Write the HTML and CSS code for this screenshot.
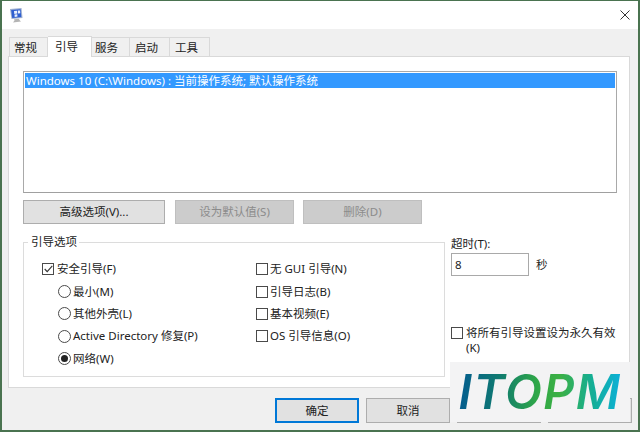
FILE: index.html
```html
<!DOCTYPE html>
<html lang="zh">
<head>
<meta charset="utf-8">
<title>系统配置</title>
<link rel="stylesheet" href="styles.css">
</head>
<body>
<div class="window">
  <header class="titlebar">
    <svg class="app-icon" width="14" height="15" viewBox="0 0 14 15">
      <path d="M1 1 12.5 0 13.5 10 2.5 11Z" fill="#9fb0d0"/>
      <path d="M2.2 2 11.6 1.2 12.3 9 3.2 9.9Z" fill="#2f5fd0"/>
      <path d="M5 3 8 2.7 8.3 5.6 5.3 5.9ZM8.8 2.6 11 2.4 11.3 5.2 9 5.4ZM5.5 6.5 8.3 6.2 8.5 8.6 5.7 8.9Z" fill="#eaf1fd"/>
      <path d="M5 11.2 10 10.8 10.5 12 12 13.5 4 14.5 5.5 12.5Z" fill="#b4b4b4"/>
    </svg>
    <svg class="close-icon" width="10" height="10" viewBox="0 0 10 10">
      <path d="M.5.5 9.5 9.5M9.5.5.5 9.5" stroke="#333" stroke-width="1" fill="none"/>
    </svg>
  </header>
  <main class="content">
    <nav class="tabs">
      <span class="tab tab-a">常规</span>
      <span class="tab tab-active">引导</span>
      <span class="tab tab-b">服务</span>
      <span class="tab tab-c">启动</span>
      <span class="tab tab-c">工具</span>
    </nav>
    <section class="panel">
      <div class="listbox">
        <div class="list-row">Windows 10 (C:\Windows) : 当前操作系统; 默认操作系统</div>
      </div>
      <div class="list-actions">
        <button class="btn btn-wide">高级选项(V)...</button>
        <button class="btn btn-mid btn-off">设为默认值(S)</button>
        <button class="btn btn-mid btn-off">删除(D)</button>
      </div>
      <div class="options">
        <fieldset class="group">
          <legend class="legend">引导选项</legend>
          <div class="col col-left">
            <label class="row"><span class="check checked"><svg width="9" height="8" viewBox="0 0 9 8"><path d="M.7 4 3.2 6.6 8.3.8" stroke="#333" stroke-width="1.1" fill="none"/></svg></span>安全引导(F)</label>
            <label class="row row-radio"><span class="radio"></span>最小(M)</label>
            <label class="row row-radio"><span class="radio"></span>其他外壳(L)</label>
            <label class="row row-radio"><span class="radio"></span>Active Directory 修复(P)</label>
            <label class="row row-radio"><span class="radio radio-on"></span>网络(W)</label>
          </div>
          <div class="col col-right">
            <label class="row"><span class="check"></span>无 GUI 引导(N)</label>
            <label class="row"><span class="check"></span>引导日志(B)</label>
            <label class="row"><span class="check"></span>基本视频(E)</label>
            <label class="row"><span class="check"></span>OS 引导信息(O)</label>
          </div>
        </fieldset>
        <div class="side">
          <div class="timeout-label">超时(T):</div>
          <div class="timeout-row">
            <span class="input">8</span>
            <span class="unit">秒</span>
          </div>
          <label class="permanent"><span class="check"></span><span class="permanent-text">将所有引导设置设为永久有效<br>(K)</span></label>
        </div>
      </div>
    </section>
    <footer class="footer">
      <button class="btn btn-foot btn-default">确定</button>
      <button class="btn btn-foot">取消</button>
      <button class="btn btn-foot"></button>
      <button class="btn btn-foot"></button>
    </footer>
  </main>
  <div class="logo"><span class="logo-text">ITOPM</span></div>
</div>
</body>
</html>
```
FILE: styles.css
```css
* { box-sizing: border-box; }
html, body { margin: 0; padding: 0; }
body {
  width: 640px;
  height: 432px;
  overflow: hidden;
  font: 11.5px/16px "Noto Sans", "Noto Sans CJK SC", sans-serif;
  color: #222;
}
.window {
  position: relative;
  width: 640px;
  height: 432px;
  border: 2px solid #4a7350;
  border-width: 1px 2px 2px 2px;
  background: #f0f0f0;
  display: flex;
  flex-direction: column;
}
.titlebar {
  height: 28px;
  flex: none;
  background: #fff;
  display: flex;
  align-items: center;
  justify-content: space-between;
  padding: 0 8px 0 7px;
}
.content { flex: 1; padding: 7px 6px 0 6px; display: flex; flex-direction: column; }
.tabs { display: flex; height: 21px; padding-left: 1px; align-items: flex-end; position: relative; z-index: 1; margin-bottom: -1px; }
.tab {
  height: 20px;
  background: #f0f0f0;
  border: 1px solid #d9d9d9;
  border-left-width: 0;
  line-height: 19px;
  color: #222;
}
.tab-a { width: 39px; border-left-width: 1px; padding-left: 4px; }
.tab-active { width: 44px; height: 21px; background: #fff; border-bottom: 0; line-height: 19px; padding-left: 7px; }
.tab-b { width: 38px; padding-left: 3px; }
.tab-c { width: 40px; padding-left: 5px; }
.panel {
  width: 622px;
  height: 332px;
  flex: none;
  background: #fff;
  border: 1px solid #d9d9d9;
  padding: 14px 13px 0 14px;
}
.listbox {
  width: 594px;
  height: 122px;
  border: 1px solid #a9a9a9;
  padding: 1px;
  border-bottom-color: #a0a0a0;
}
.list-row { height: 15px; line-height: 15px; padding-left: 1px; background: #3399ff; color: #fff; white-space: nowrap; }
.list-actions { display: flex; margin-top: 7px; }
.btn {
  font: inherit;
  color: #222;
  background: #e1e1e1;
  border: 1px solid #adadad;
  padding: 0;
  height: 24px;
  border-radius: 0;
}
.btn-wide { width: 142px; margin-right: 10px; }
.btn-mid { width: 119px; margin-right: 9px; }
.btn-off { background: #cccccc; border-color: #bfbfbf; color: #8b8b8b; }
.options { display: flex; margin-top: 11px; }
.group {
  position: relative;
  width: 422px;
  height: 142px;
  margin: 0;
  padding: 9px 0 0 18px;
  border: 1px solid #dcdcdc;
  border-radius: 0;
  display: flex;
  min-width: 0;
}
.legend { padding: 0 2px 0 3px; margin-left: -14px; line-height: 14px; }
.col { display: flex; flex-direction: column; }
.col-left { width: 214px; }
.row { display: flex; align-items: center; height: 22.4px; white-space: nowrap; }
.row-radio { padding-left: 16px; }
.check {
  width: 12px;
  height: 12px;
  border: 1px solid #4a4a4a;
  background: #fff;
  margin-right: 3px;
  flex: none;
  display: flex;
  align-items: center;
  justify-content: center;
}
.col-right .check { margin-right: 2px; }
.radio {
  width: 13px;
  height: 13px;
  border: 1px solid #4a4a4a;
  border-radius: 50%;
  background: #fff;
  margin-right: 2px;
  flex: none;
  position: relative;
}
.radio-on::after {
  content: "";
  position: absolute;
  left: 2px;
  top: 2px;
  width: 7px;
  height: 7px;
  border-radius: 50%;
  background: #222;
}
.side { margin-left: 6px; width: 165px; margin-top: 1px; display: flex; flex-direction: column; }
.timeout-label { height: 16px; line-height: 16px; margin-bottom: 1px; }
.timeout-row { display: flex; align-items: center; }
.input {
  width: 78px;
  height: 23px;
  border: 1px solid #a9a9a9;
  background: #fff;
  line-height: 21px;
  padding-left: 3px;
}
.unit { margin-left: 7px; }
.permanent { display: flex; margin-top: 50px; align-items: flex-start; }
.permanent .check { margin-top: 1px; margin-right: 3px; }
.permanent-text { width: 150px; line-height: 14.5px; display: block; white-space: nowrap; }
.footer { display: flex; justify-content: flex-end; gap: 7px; padding: 10px 0 0 0; }
.btn-foot { width: 84px; height: 25px; }
.btn-default { border: 2px solid #0078d7; }
.logo {
  position: absolute;
  left: 448px;
  top: 361px;
  width: 180px;
  height: 60px;
  background: #f3f3f4;
  display: flex;
  align-items: center;
  justify-content: center;
}
.logo-text {
  font: italic 600 48px/50px Inter, sans-serif;
  letter-spacing: 1.5px;
  background: linear-gradient(90deg, #035b8f 0%, #0f7a70 25%, #2fa748 48%, #3cb044 62%, #14ae96 82%, #0bb0dc 100%);
  -webkit-background-clip: text;
  background-clip: text;
  color: transparent;
}
```
